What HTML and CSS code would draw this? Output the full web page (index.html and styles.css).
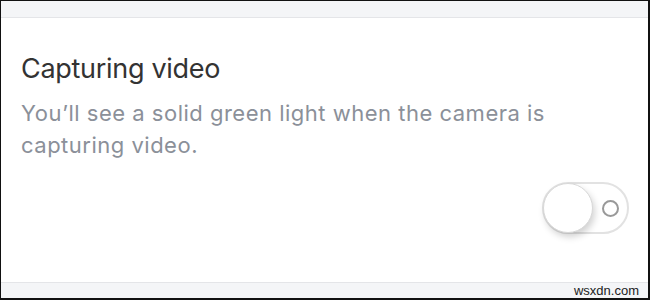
FILE: index.html
```html
<!DOCTYPE html>
<html lang="en">

<head>
    <meta charset="UTF-8">
    <meta name="viewport" content="width=device-width, initial-scale=1.0">
    <title>Capturing video</title>
    <link rel="stylesheet" href="styles.css">
</head>

<body>
    <div class="screen">
        <div class="band top"></div>
        <div class="setting">
            <h2 class="title">Capturing video</h2>
            <p class="desc">You’ll see a solid green light when the camera is capturing video.</p>
            <div class="row">
                <div class="toggle">
                    <span class="knob"></span>
                    <span class="ring"></span>
                </div>
            </div>
        </div>
        <div class="band bottom">
            <span class="mark">wsxdn.com</span>
        </div>
    </div>
</body>

</html>
```

FILE: styles.css
```css
* {
    margin: 0;
    padding: 0;
    box-sizing: border-box;
}

body {
    background: #111;
    width: 650px;
    height: 300px;
    overflow: hidden;
    padding: 1px 2px 2px 1px;
    font-family: Inter, "Noto Sans", sans-serif;
}

.screen {
    display: flex;
    flex-direction: column;
    height: 297px;
    background: #fff;
}

.band {
    background: #f4f5f7;
}

.top {
    height: 17px;
    border-bottom: 1px solid #e4e5e8;
}

.bottom {
    height: 16px;
    border-top: 1px solid #e4e5e8;
    display: flex;
    justify-content: flex-end;
    align-items: center;
    padding-right: 9px;
}

.mark {
    font-family: "Liberation Sans", Arial, sans-serif;
    font-size: 13px;
    color: #222;
}

.setting {
    flex: 1;
    padding: 35px 19px 0 20px;
}

.title {
    font-size: 27px;
    font-weight: 400;
    color: #333;
    line-height: 32px;
    letter-spacing: -0.3px;
}

.desc {
    margin-top: 12px;
    font-size: 22px;
    line-height: 32px;
    color: #8b9099;
    letter-spacing: 0.5px;
    width: 570px;
}

.row {
    display: flex;
    justify-content: flex-end;
    margin-top: 21px;
}

.toggle {
    position: relative;
    width: 87px;
    height: 52px;
    border: 2px solid #e2e2e2;
    border-radius: 26px;
    background: #fff;
}

.knob {
    position: absolute;
    left: -1px;
    top: -1px;
    width: 50px;
    height: 50px;
    border-radius: 50%;
    background: #fff;
    border: 1px solid #d8d8d8;
    box-shadow: 2px 4px 7px rgba(0, 0, 0, 0.18);
}

.ring {
    position: absolute;
    left: 58px;
    top: 16px;
    width: 17px;
    height: 17px;
    border-radius: 50%;
    border: 2px solid #999;
}
```
